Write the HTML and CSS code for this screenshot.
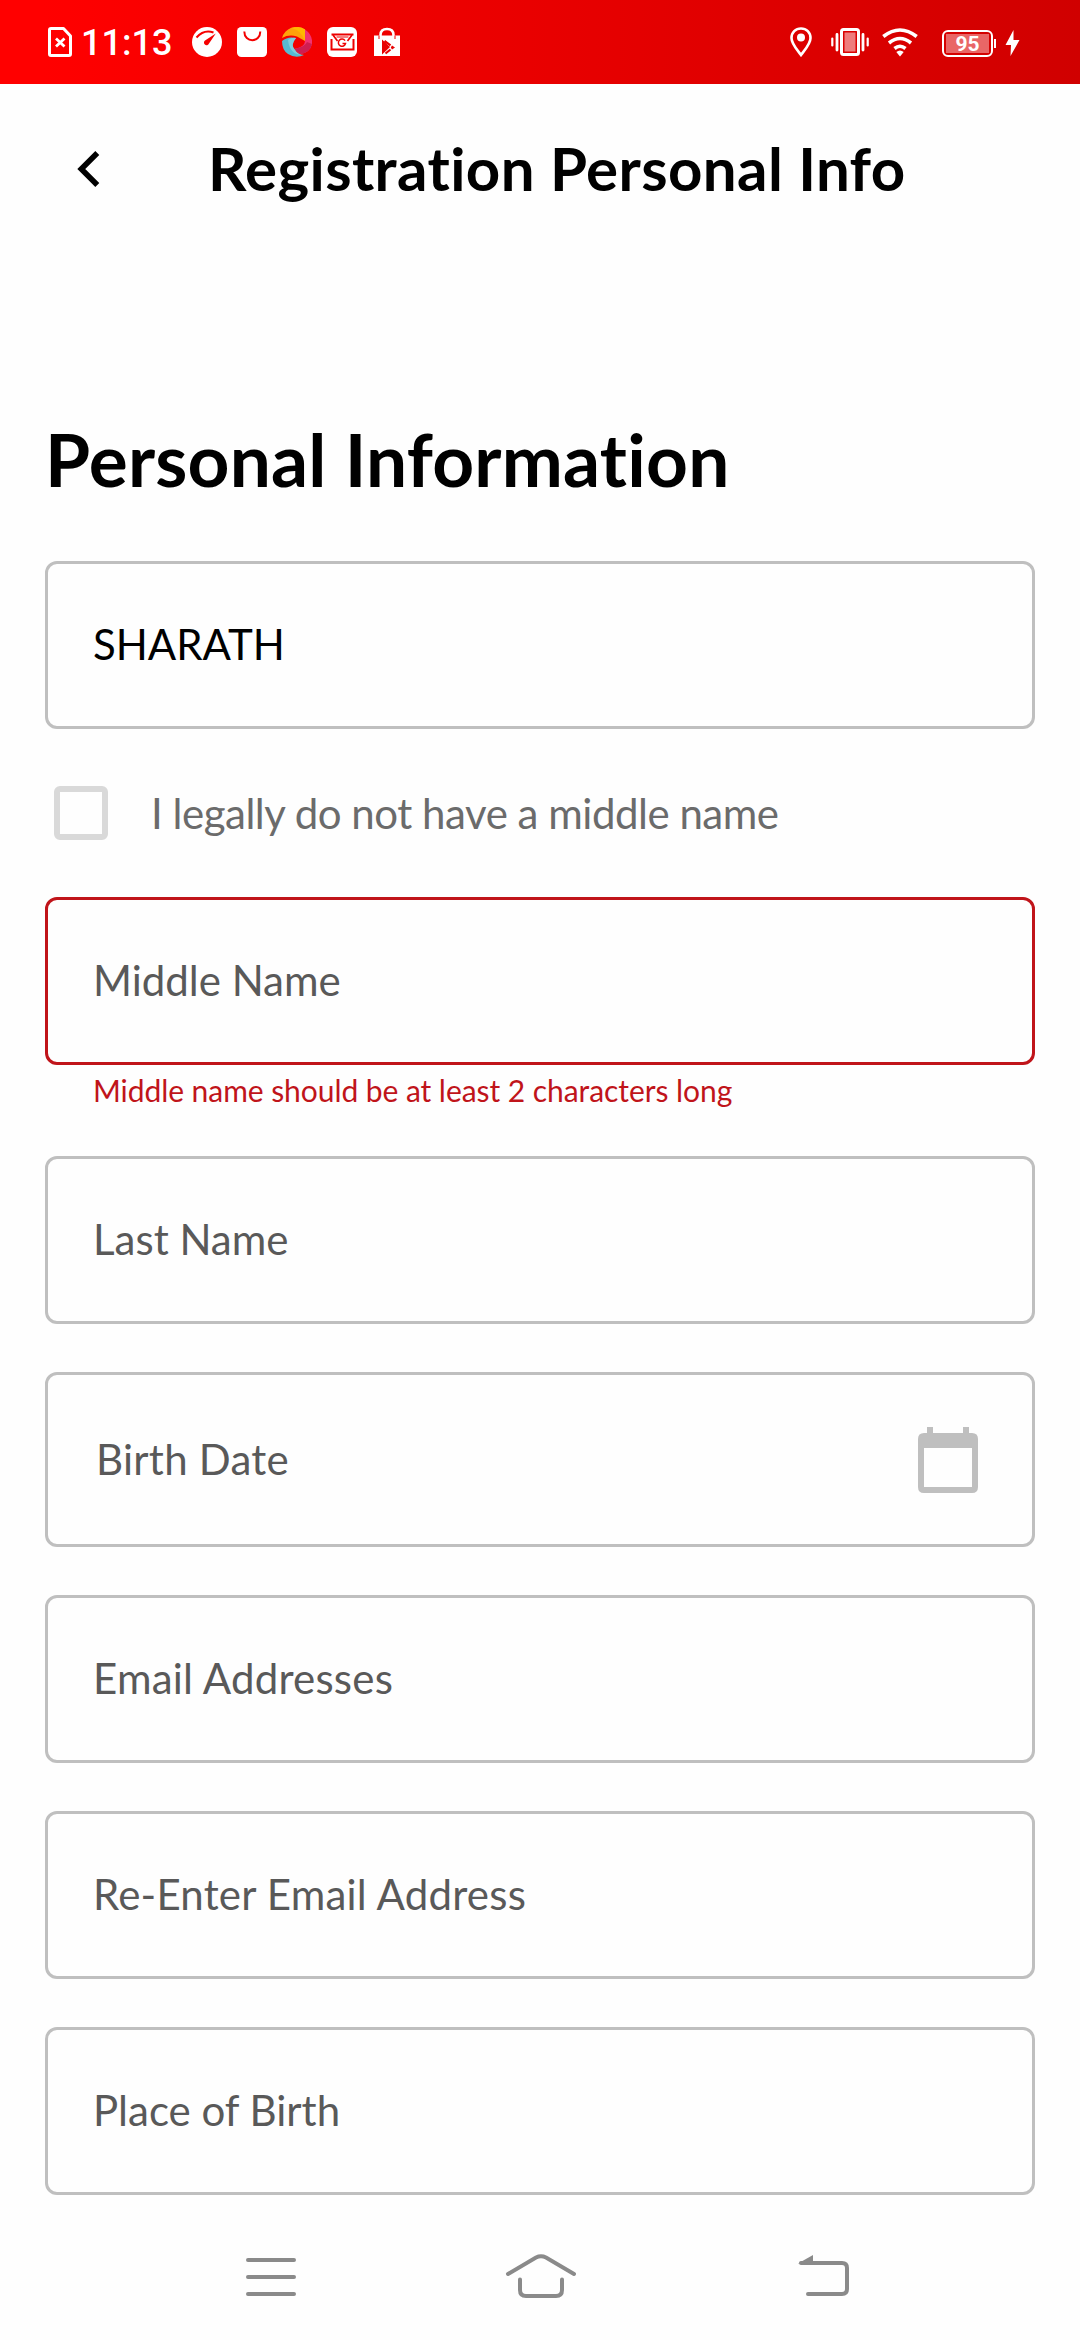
FILE: index.html
```html
<!DOCTYPE html>
<html lang="en">
<head>
<meta charset="utf-8">
<title>Registration Personal Info</title>
<link rel="stylesheet" href="styles.css">
</head>
<body>
<div class="screen">
  <div class="status">
    <svg class="sim" width="24" height="30" viewBox="0 0 24 30" fill="none" stroke="#fff"><path stroke-width="3" stroke-linejoin="round" d="M3 1.5H15.5L22.5 9V27Q22.500 28.500 21 28.500H3Q1.500 28.500 1.500 27V3Q1.500 1.500 3 1.500Z"/><path stroke-width="2.800" d="M8 11.500L16.500 19.500M16.500 11.500L8 19.500"/></svg>
    <span class="clock">11:13</span>
    <div class="apps">
      <svg width="30" height="30" viewBox="0 0 30 30"><circle cx="15" cy="15" r="15" fill="#fff"/><path d="M4.500 10.500Q12 2 21.500 5.500" fill="none" stroke="#f60000" stroke-width="2"/><path d="M23.800 6.500L17 16.500A2.600 2.600 0 1 1 13.400 13.300Z" fill="#f60000"/></svg>
      <svg width="30" height="30" viewBox="0 0 30 30"><rect width="30" height="30" rx="4.500" fill="#fff"/><path d="M7.300 4.500C7.300 16 23.300 16 23.300 4.500" fill="none" stroke="#f40000" stroke-width="2"/></svg>
      <svg width="30" height="30" viewBox="0 0 30 30"><path d="M0 11A15 15 0 0 1 23 2.500V14L15 9.500Q7 7 0 11Z" fill="#ffa10a"/><path d="M10 1.500Q19 3 23 14V2.500Q17-1.500 10 1.500Z" fill="#ffb800"/><path d="M23 2.500Q31 8 30 17Q28 26 18 27L12 22Q23 20 23 14Z" fill="#f23270"/><path d="M30 17Q28 26 18 27L12 22Q23 20 25 15Z" fill="#cf1e51"/><path d="M0 14Q6 9 14 11Q8 18 13 23Q16 28 22 28Q14 32 6 27Q0 23 0 14Z" fill="#58bad2"/><path d="M6 13Q10 10 14 11Q8 18 13 23Q16 28 22 28Q8 29 6 13Z" fill="#80cddd"/></svg>
      <svg width="30" height="30" viewBox="0 0 30 30"><rect width="30" height="30" rx="6" fill="#fff"/><g fill="none" stroke="#ed0000" stroke-width="2"><path d="M4.500 12V22.500H26.500V12M4.500 7.500H26.500"/><path d="M6 8L10.500 14M25 8L20.500 14" stroke-width="1.700"/><path d="M18 13.700A3.600 3.600 0 1 0 18.500 16.500H15.500" stroke-width="1.500"/><path d="M9.500 10H21.500" stroke-width="1"/></g></svg>
      <svg width="30" height="30" viewBox="0 0 30 30"><path d="M2 8.500H28V29H2Z" fill="#fff"/><path d="M8.500 12V8Q8.500 2 15 2T21.500 8V12" fill="none" stroke="#fff" stroke-width="2.600"/><path d="M7 8.500V12M23 8.500V12" stroke="#ed0000" stroke-width="1"/><path d="M10 12.500L18 20L10 27.500Z" fill="#e80000"/><path d="M12.500 14L18.500 18.300M18.500 22.500L13.500 26.500" fill="none" stroke="#e80000" stroke-width="2.200"/><path d="M20 18.500L23 20.500L20 22.500L18.800 20.500Z" fill="#e80000"/></svg>
    </div>
    <svg class="pin" width="22" height="30" viewBox="0 0 22 30"><path d="M11 1.500C5.500 1.500 1.500 5.500 1.500 11C1.500 17 7 22.500 11 28C15 22.500 20.500 17 20.500 11C20.500 5.500 16.500 1.500 11 1.500Z" fill="none" stroke="#fff" stroke-width="2.600"/><circle cx="11" cy="10.500" r="4" fill="#fff"/></svg>
    <svg class="vibrate" width="38" height="30" viewBox="0 0 38 30" fill="none" stroke="#fff"><rect x="10.500" y="2.500" width="17" height="25" rx="2" stroke-width="3"/><rect x="13.500" y="5.500" width="11" height="19" fill="#ee7c7c" stroke="none"/><path d="M6 7.500V23M32 7.500V23" stroke-width="2.800" stroke-linecap="round"/><path d="M1.300 11.500V18.500M36.700 11.500V18.500" stroke-width="2.200" stroke-linecap="round"/></svg>
    <svg class="wifi" width="36" height="30" viewBox="0 0 36 30"><g fill="none" stroke="#fff" stroke-width="3.600"><path d="M1.300 9.500Q18-3.500 34.700 9.500M7 16Q18 7 29 16M12.500 21.500Q18 17 23.500 21.500"/></g><path d="M14.300 25Q18 22 21.700 25L18 29.500Z" fill="#fff"/></svg>
    <div class="battery"><span class="charge">95</span></div>
    <svg class="bolt" width="15" height="28" viewBox="0 0 15 28"><path d="M8.500 1L.5 16H6L5.500 27L14.500 11H8.500Z" fill="#fff"/></svg>
  </div>

  <header class="appbar">
    <svg class="back" width="24" height="38" viewBox="0 0 24 38"><path d="M20.300 3L4.300 19L20.300 35" fill="none" stroke="#000" stroke-width="5.600"/></svg>
    <h1 class="title">Registration Personal Info</h1>
  </header>

  <main class="form">
    <h2 class="heading">Personal Information</h2>
    <div class="field filled">SHARATH</div>
    <div class="check"><span class="box"></span><span class="check-label">I legally do not have a middle name</span></div>
    <div class="field invalid">Middle Name</div>
    <p class="error">Middle name should be at least 2 characters long</p>
    <div class="stack">
      <div class="field">Last Name</div>
      <div class="field date"><span>Birth Date</span>
        <svg width="60" height="66" viewBox="0 0 60 66"><path fill="#bfbfbf" fill-rule="evenodd" d="M9 0H15V6H45V0H51V6H54Q60 6 60 12V60Q60 66 54 66H6Q0 66 0 60V12Q0 6 6 6H9ZM6 21V60H54V21Z"/></svg>
      </div>
      <div class="field email">Email Addresses</div>
      <div class="field email">Re-Enter Email Address</div>
      <div class="field">Place of Birth</div>
    </div>
  </main>

  <nav class="navbar">
    <svg width="52" height="46" viewBox="0 0 52 46"><path d="M3 8H49M3 25H49M3 42H49" fill="none" stroke="#8a8a8a" stroke-width="4" stroke-linecap="round"/></svg>
    <svg width="72" height="46" viewBox="0 0 72 46"><path d="M3 22L31 5.500Q36 3 41 5.500L69 22M15 27.500V38Q15 44 21 44H51Q57 44 57 38V27.500" fill="none" stroke="#8a8a8a" stroke-width="4" stroke-linecap="round"/></svg>
    <svg width="52" height="46" viewBox="0 0 52 46"><path d="M3 11H44Q49 11 49 16V37Q49 42 44 42H10" fill="none" stroke="#8a8a8a" stroke-width="4" stroke-linecap="round"/><path d="M0 11.500L15 3V12Z" fill="#8a8a8a"/></svg>
  </nav>
</div>
</body>
</html>
```

FILE: styles.css
```css
* { box-sizing: border-box; }
body { margin: 0; background: #fff; font-family: Lato, sans-serif; font-variant-ligatures: none; color: #000; }
svg { display: block; flex: none; }
.screen { width: 1080px; height: 2340px; display: flex; flex-direction: column; background: #fefefe; overflow: hidden; }

.status { height: 84px; flex: none; display: flex; align-items: center; padding-left: 48px; background: linear-gradient(90deg, #f00 0, #f00 4%, #d00000 100%); font-family: Roboto, sans-serif; color: #fff; }
.clock { width: 110px; margin-left: 9px; font-size: 36px; font-weight: 500; line-height: 42px; padding-top: 2px; }
.apps { display: flex; gap: 15px; margin-left: 1px; }
.pin { margin-left: 388px; }
.vibrate { margin-left: 19px; }
.wifi { margin-left: 13px; }
.battery { position: relative; width: 51px; height: 27px; margin: 3px 0 0 24px; padding: 2px; border: 2px solid #fff; border-radius: 6px; }
.battery::after { content: ""; position: absolute; right: -5px; top: 7px; width: 2px; height: 9px; background: #fff; }
.charge { display: block; width: 43px; height: 19px; background: #e96666; font-size: 21px; font-weight: 700; line-height: 20px; text-align: center; }
.bolt { margin: 2px 0 0 12px; }

.appbar { height: 170px; flex: none; display: flex; align-items: center; padding-left: 77px; }
.title { margin: 0 0 2px 107px; font-size: 60px; font-weight: 700; line-height: 72px; letter-spacing: 0.4px; white-space: nowrap; }

.form { display: flex; flex-direction: column; padding: 162px 45px 0; }
.heading { margin: 0 0 58px; font-size: 73px; font-weight: 700; line-height: 87px; letter-spacing: 0.22px; white-space: nowrap; }
.field { height: 168px; display: flex; align-items: center; padding: 0 45px 3px; border: 3px solid #bfbfbf; border-radius: 12px; font-size: 42px; color: #595959; white-space: nowrap; }
.filled { color: #000; }
.check { height: 168px; display: flex; align-items: center; padding-left: 9px; }
.box { width: 54px; height: 54px; border: 6px solid #d9d9d9; border-radius: 6px; }
.check-label { margin: 0 0 1px 43px; font-size: 42px; letter-spacing: -0.48px; color: #6b6b6b; white-space: nowrap; }
.invalid { border-color: #c0141a; }
.error { height: 91px; margin: 0; padding: 7px 0 0 48px; font-size: 30px; line-height: 36px; letter-spacing: -0.06px; color: #c0141a; white-space: nowrap; }
.stack { display: flex; flex-direction: column; gap: 48px; }
.email { letter-spacing: 0.22px; }
.date { height: 175px; justify-content: space-between; padding: 0 54px 1px 48px; letter-spacing: 0.25px; }
.date svg { margin-top: 1px; }

.navbar { margin-top: 57px; display: flex; justify-content: space-between; padding: 0 230px 0 245px; }
.navbar svg:nth-child(2) { margin-right: 13px; }
```
